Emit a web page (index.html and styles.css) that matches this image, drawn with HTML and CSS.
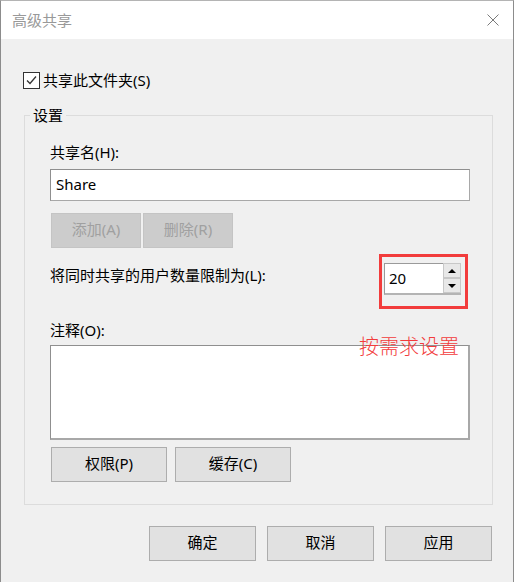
FILE: index.html
```html
<html>

<head>
    <meta charset="utf-8">
    <title>高级共享</title>
    <link rel="stylesheet" href="styles.css">
</head>

<body>
    <div class="window">
        <div class="titlebar">
            <span class="title">高级共享</span>
            <svg class="close" width="12" height="12" viewBox="0 0 12 12">
                <path d="M0.5 0.5 L11.5 11.5 M11.5 0.5 L0.5 11.5" stroke="#7a7a7a" stroke-width="1" fill="none"/>
            </svg>
        </div>
        <div class="content">
            <label class="check-row">
                <span class="checkbox">
                    <svg width="13" height="13" viewBox="0 0 13 13">
                        <path d="M2 6.5 L5 9.5 L11 2.5" stroke="#333" stroke-width="1.3" fill="none"/>
                    </svg>
                </span>
                <span>共享此文件夹(S)</span>
            </label>

            <fieldset class="group">
                <legend>设置</legend>
                <div class="group-body">
                    <div class="label">共享名(H):</div>
                    <div class="textbox">Share</div>
                    <div class="btn-row small-row">
                        <button class="btn disabled">添加(A)</button>
                        <button class="btn disabled">删除(R)</button>
                    </div>
                    <div class="limit-row">
                        <div class="label limit-label">将同时共享的用户数量限制为(L):</div>
                        <div class="highlight">
                            <div class="spin">
                                <div class="spin-value">20</div>
                                <div class="spin-buttons">
                                    <div class="spin-btn"><span class="arrow-up"></span></div>
                                    <div class="spin-btn"><span class="arrow-down"></span></div>
                                </div>
                            </div>
                        </div>
                    </div>
                    <div class="comment">
                        <div class="label comment-label">注释(O):</div>
                        <div class="textarea"></div>
                        <div class="note">按需求设置</div>
                    </div>
                    <div class="btn-row perm-row">
                        <button class="btn wide">权限(P)</button>
                        <button class="btn wide">缓存(C)</button>
                    </div>
                </div>
            </fieldset>

            <div class="footer">
                <button class="btn dialog">确定</button>
                <button class="btn dialog">取消</button>
                <button class="btn dialog">应用</button>
            </div>
        </div>
    </div>
</body>

</html>
```

FILE: styles.css
```css
body {
    margin: 0;
    background: #fff;
    font: 400 15px/20px "Noto Sans", "Noto Sans CJK SC", sans-serif;
    color: #000;
}

.window {
    width: 512px;
    height: 581px;
    border-top: 1px solid #b4b4b4;
    border-left: 1px solid #8c8c8c;
    border-right: 1px solid #8c8c8c;
    background: #f0f0f0;
    overflow: hidden;
}

.titlebar {
    height: 38px;
    background: #fff;
    display: flex;
    align-items: center;
    justify-content: space-between;
    padding: 0 14px 0 11px;
}

.title {
    color: #999;
    font-family: "Noto Sans CJK SC", sans-serif;
}

.content {
    padding-top: 31px;
}

.check-row {
    display: flex;
    align-items: center;
    gap: 3px;
    margin-left: 22px;
    height: 20px;
}

.checkbox {
    width: 15px;
    height: 15px;
    border: 1px solid #333;
    background: #fff;
    display: flex;
    align-items: center;
    justify-content: center;
}

.group {
    box-sizing: border-box;
    width: 469px;
    min-width: 0;
    margin: 15px 0 0 23px;
    padding: 0;
    border: 1px solid #dcdcdc;
}

.group legend {
    margin-left: 5px;
    padding: 0 3px;
    line-height: 20px;
}

.group-body {
    padding: 17px 22px 22px 25px;
}

.label {
    height: 20px;
}

.textbox {
    box-sizing: border-box;
    margin-top: 7px;
    height: 32px;
    padding: 0 5px;
    line-height: 29px;
    background: #fff;
    border: 1px solid #8f8f8f;
    border-right-color: #a8a8a8;
    border-bottom-color: #a8a8a8;
}

.btn-row {
    display: flex;
    padding-left: 1px;
}

.small-row {
    margin-top: 12px;
    gap: 2px;
}

.perm-row {
    margin-top: 7px;
    gap: 8px;
}

.btn {
    box-sizing: border-box;
    height: 35px;
    margin: 0;
    padding: 0 0 3px;
    font: inherit;
    color: #000;
    background: #e1e1e1;
    border: 1px solid #adadad;
}

.btn.disabled {
    width: 90px;
    color: #a0a0a0;
    background: #cccccc;
    border-color: #c4c4c4;
}

.btn.wide {
    width: 116px;
}

.btn.dialog {
    width: 107px;
}

.limit-row {
    display: flex;
    justify-content: space-between;
    align-items: flex-start;
    margin-top: 6px;
}

.limit-label {
    margin-top: 11px;
}

.highlight {
    width: 80px;
    padding: 6px 1px 11px 2px;
    border: 3px solid #f23c3c;
    margin-right: 2px;
}

.spin {
    display: flex;
    height: 32px;
}

.spin-value {
    box-sizing: border-box;
    width: 59px;
    padding-left: 4px;
    line-height: 28px;
    background: #fff;
    border: 1px solid #9a9a9a;
    border-right: none;
    border-bottom: 2px solid #b4b4b4;
}

.spin-buttons {
    width: 18px;
    display: flex;
    flex-direction: column;
    border-bottom: 2px solid #b4b4b4;
}

.spin-btn {
    flex: 1;
    background: #e8e8e8;
    border: 1px solid #c8c8c8;
    display: flex;
    align-items: center;
    justify-content: center;
}

.arrow-up,
.arrow-down {
    width: 0;
    height: 0;
    border-left: 4px solid transparent;
    border-right: 4px solid transparent;
}

.arrow-up {
    border-bottom: 4px solid #000;
}

.arrow-down {
    border-top: 4px solid #000;
}

.comment {
    position: relative;
    margin-top: 11px;
}

.textarea {
    box-sizing: border-box;
    margin-top: 5px;
    height: 95px;
    background: #fff;
    border: 1px solid #8f8f8f;
    border-right: 2px solid #a8a8a8;
    border-bottom: 2px solid #a8a8a8;
}

.note {
    position: absolute;
    left: 309px;
    top: 16px;
    font: 300 20px/20px "Noto Sans CJK SC", sans-serif;
    color: #f23c3c;
}

.footer {
    display: flex;
    justify-content: flex-end;
    gap: 11px;
    margin-top: 21px;
    padding-right: 21px;
}
```
